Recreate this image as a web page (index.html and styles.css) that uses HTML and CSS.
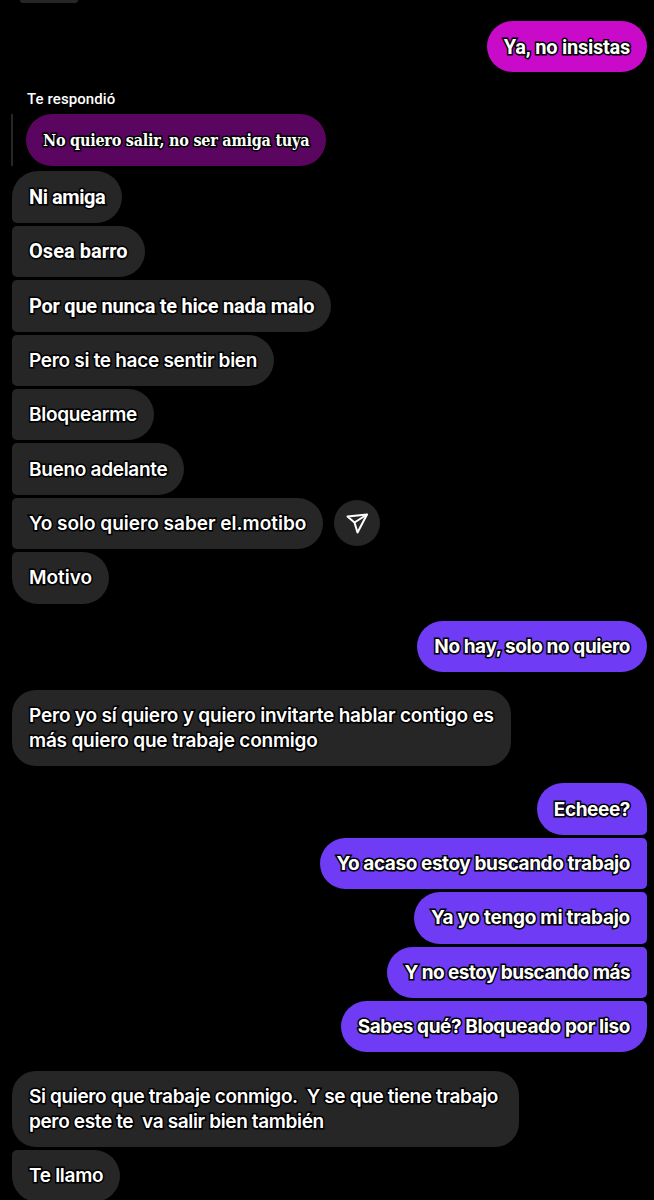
FILE: index.html
```html
<!DOCTYPE html>
<html lang="es">
<head>
<meta charset="utf-8">
<title>Chat</title>
<link rel="stylesheet" href="styles.css">
</head>
<body>
<main class="chat">
  <div class="stub"></div>
  <div class="row out first"><div class="bubble magenta roboto open">Ya, no insistas</div></div>
  <div class="reply-label">Te respondió</div>
  <div class="reply-wrap"><div class="bubble quoted">No quiero salir, no ser amiga tuya</div></div>
  <div class="group">
    <div class="row"><div class="bubble in roboto tl">Ni amiga</div></div>
    <div class="row"><div class="bubble in roboto loose mid">Osea barro</div></div>
    <div class="row"><div class="bubble in roboto open mid">Por que nunca te hice nada malo</div></div>
    <div class="row"><div class="bubble in inter mid">Pero si te hace sentir bien</div></div>
    <div class="row"><div class="bubble in inter mid">Bloquearme</div></div>
    <div class="row"><div class="bubble in inter mid">Bueno adelante</div></div>
    <div class="row"><div class="bubble in inter wide mid">Yo solo quiero saber el.motibo</div>
      <span class="share"><svg viewBox="0 0 24 24" width="24" height="24" fill="none" stroke="#fff" stroke-width="2" stroke-linejoin="round"><path d="M22 3.5 2.5 5.5 9.5 11.5 12.5 21.5Z"/><path d="M22 3.5 9.5 11.5"/></svg></span>
    </div>
    <div class="row"><div class="bubble in inter wide bl">Motivo</div></div>
  </div>
  <div class="row out solo-out"><div class="bubble violet tight">No hay, solo no quiero</div></div>
  <div class="row solo-in"><div class="bubble in inter medium multi">Pero yo sí quiero y quiero invitarte hablar contigo es<br>más quiero que trabaje conmigo</div></div>
  <div class="group out-group">
    <div class="row out"><div class="bubble violet tight otr">Echeee?</div></div>
    <div class="row out"><div class="bubble violet tight omid">Yo acaso estoy buscando trabajo</div></div>
    <div class="row out"><div class="bubble violet tight airy omid">Ya yo tengo mi trabajo</div></div>
    <div class="row out"><div class="bubble violet tight dense omid">Y no estoy buscando más</div></div>
    <div class="row out"><div class="bubble violet tight obr">Sabes qué? Bloqueado por liso</div></div>
  </div>
  <div class="group last-group">
    <div class="row"><div class="bubble in inter multi compact tl">Si quiero que trabaje conmigo.&nbsp; Y se que tiene trabajo<br>pero este te&nbsp; va salir bien también</div></div>
    <div class="row"><div class="bubble in inter bl narrow">Te llamo</div></div>
  </div>
</main>
</body>
</html>
```
FILE: styles.css
```css
html, body {
  margin: 0;
  background: #000;
}
.chat {
  width: 654px;
  height: 1200px;
  overflow: hidden;
  padding: 0 7px 0 12px;
  box-sizing: border-box;
  color: #fff;
  font-family: Inter, "Liberation Sans", sans-serif;
}
.stub {
  width: 58px;
  height: 3px;
  margin-left: 8px;
  background: #262626;
  border-radius: 0 0 12px 12px;
}
.row {
  display: flex;
  align-items: center;
}
.row.out { justify-content: flex-end; }
.first { margin-top: 18px; }
.bubble {
  height: 51.4px;
  box-sizing: border-box;
  padding: 0 17px;
  display: flex;
  align-items: center;
  border-radius: 26px;
  font-size: 20px;
  font-weight: 600;
  white-space: nowrap;
  -webkit-text-stroke: 3px #000;
  paint-order: stroke fill;
}
.roboto {
  font-family: Roboto, sans-serif;
  font-weight: 700;
  letter-spacing: -0.45px;
}
.roboto.open { letter-spacing: -0.25px; }
.roboto.loose { letter-spacing: 0.05px; }
.inter {
  font-family: Inter, sans-serif;
  font-size: 19px;
  letter-spacing: -0.3px;
}
.inter.wide { letter-spacing: 0; }
.inter.medium { letter-spacing: -0.2px; }
.inter.compact { letter-spacing: -0.36px; padding-right: 21px; }
.in { background: #262626; }
.magenta { background: #c90ac9; }
.violet { background: #6f3bf5; }
.tight {
  font-family: Inter, sans-serif;
  font-size: 19px;
  font-weight: 700;
  letter-spacing: -0.42px;
}
.tight.airy { letter-spacing: -0.28px; }
.tight.dense { letter-spacing: -0.55px; }
.tl { border-bottom-left-radius: 5px; }
.mid { border-top-left-radius: 5px; border-bottom-left-radius: 5px; }
.bl { border-top-left-radius: 5px; }
.otr { border-bottom-right-radius: 5px; }
.omid { border-top-right-radius: 5px; border-bottom-right-radius: 5px; }
.obr { border-top-right-radius: 5px; }
.reply-label {
  margin: 18px 0 0 15px;
  height: 24px;
  line-height: 19px;
  font-family: Roboto, sans-serif;
  font-size: 15px;
  font-weight: 500;
  letter-spacing: 0.1px;
}
.reply-wrap {
  border-left: 2px solid #262626;
  margin-left: -1px;
  padding-left: 13px;
}
.quoted {
  display: inline-flex;
  background: #5a0661;
  font-family: "DejaVu Serif Condensed", "DejaVu Serif", serif;
  font-size: 16px;
  font-weight: 700;
  letter-spacing: -0.23px;
  padding: 0 17px;
}
.group {
  display: flex;
  flex-direction: column;
  gap: 3px;
  margin-top: 5.6px;
}
.share {
  width: 46px;
  height: 46px;
  margin-left: 11px;
  border-radius: 50%;
  background: #262626;
  display: flex;
  align-items: center;
  justify-content: center;
}
.solo-out { margin-top: 17.5px; }
.solo-in { margin-top: 18px; }
.multi {
  height: 76px;
  line-height: 25px;
  display: block;
  padding-top: 13px;
  border-radius: 24px;
}
.group.out-group { margin-top: 17px; }
.group.last-group { margin-top: 18.4px; }
.narrow { height: 52px; }
```
